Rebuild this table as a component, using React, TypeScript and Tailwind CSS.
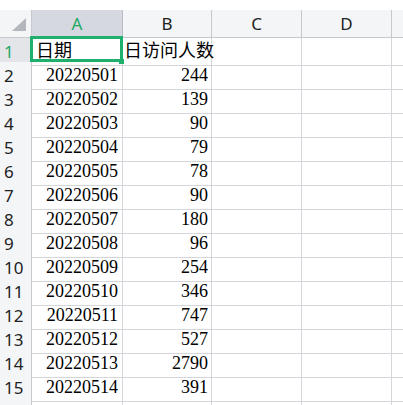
import React from 'react'

const rows: [string, string][] = [
  ['日期', '日访问人数'],
  ['20220501', '244'],
  ['20220502', '139'],
  ['20220503', '90'],
  ['20220504', '79'],
  ['20220505', '78'],
  ['20220506', '90'],
  ['20220507', '180'],
  ['20220508', '96'],
  ['20220509', '254'],
  ['20220510', '346'],
  ['20220511', '747'],
  ['20220512', '527'],
  ['20220513', '2790'],
  ['20220514', '391'],
  ['', ''],
]

const cols = 'grid grid-cols-[32px_91px_89px_90px_90px_1fr]'
const sans = "font-['Noto_Sans','Noto_Sans_CJK_SC',sans-serif]"
const serif = "font-['Liberation_Serif','Noto_Sans_CJK_SC',serif]"

export default function App() {
  return (
    <div className="relative w-[403px] h-[405px] overflow-hidden bg-white pt-[10px]">
      <div className={`${cols} h-[28px] bg-[#f4f5f7] text-[17px] text-[#222] ${sans}`}>
        <div className="relative border-r border-b border-[#c6c9d0]">
          <div className="absolute right-[5px] bottom-[6px] w-0 h-0 border-l-[14px] border-l-transparent border-b-[13px] border-b-[#b4b7bd]" />
        </div>
        <div className="flex items-center justify-center bg-[#d5d8de] text-[#1fa866] border-r border-b border-[#b8bcc5]">A</div>
        <div className="flex items-center justify-center border-r border-b border-[#c6c9d0]">B</div>
        <div className="flex items-center justify-center border-r border-b border-[#c6c9d0]">C</div>
        <div className="flex items-center justify-center border-r border-b border-[#c6c9d0]">D</div>
        <div className="border-b border-[#c6c9d0]" />
      </div>
      {rows.map((r, i) => (
        <div key={i} className={`${cols} h-[24px]`}>
          <div
            className={`flex items-center pl-[4px] text-[17px] border-r border-b border-[#c6c9d0] ${sans} ${
              i === 0 ? 'bg-[#e3e5e9] text-[#1fa866]' : 'bg-[#f4f5f7] text-[#222]'
            }`}
          >
            {i + 1}
          </div>
          <div
            className={`flex items-center text-[18px] text-black border-r border-b border-[#d4d6dc] ${serif} ${
              i === 0 ? 'justify-start pl-[4px] text-[17px]' : 'justify-end pr-[4px]'
            }`}
          >
            {r[0]}
          </div>
          <div
            className={`flex items-center text-[18px] text-black border-r border-b border-[#d4d6dc] whitespace-nowrap ${serif} ${
              i === 0 ? 'justify-start pl-[1px] text-[17px]' : 'justify-end pr-[3px]'
            }`}
          >
            {r[1]}
          </div>
          <div className="border-r border-b border-[#d4d6dc]" />
          <div className="border-r border-b border-[#d4d6dc]" />
          <div className="border-b border-[#d4d6dc]" />
        </div>
      ))}
      <div className="absolute left-[30px] top-[36px] w-[93px] h-[26px] border-[3px] border-[#20b06e]" />
      <div className="absolute left-[119px] top-[59px] w-[5px] h-[5px] bg-[#20b06e]" />
    </div>
  )
}
